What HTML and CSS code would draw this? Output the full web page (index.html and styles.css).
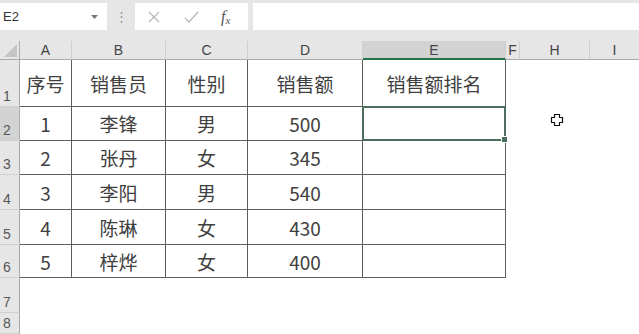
FILE: index.html
```html
<!DOCTYPE html>
<html lang="zh-CN">
<head>
  <meta charset="UTF-8">
  <title>销售额排名</title>
  <link rel="stylesheet" href="styles.css">
</head>
<body>
  <!-- formula bar -->
  <div class="toolbar">
    <div class="namebox">
      <span>E2</span>
      <svg class="caret" width="7" height="4" viewBox="0 0 7 4"><path d="M0 0h7L3.5 4z" fill="#777"/></svg>
    </div>
    <div class="grip">⋮</div>
    <div class="fxbox">
      <svg width="14" height="14" viewBox="0 0 14 14"><path d="M2 2l10 10M12 2L2 12" stroke="#b8b8b8" stroke-width="1.3" fill="none"/></svg>
      <svg width="16" height="14" viewBox="0 0 16 14"><path d="M2 8l4 4 9-10" stroke="#b8b8b8" stroke-width="1.3" fill="none"/></svg>
      <span class="fx"><i>f</i><sub>x</sub></span>
    </div>
    <div class="formula"></div>
  </div>

  <!-- sheet -->
  <div class="sheet">
    <div class="hd corner"><svg width="13" height="13" viewBox="0 0 13 13"><path d="M13 0v13H0z" fill="#c4c4c4"/></svg></div>
    <div class="hd col">A</div>
    <div class="hd col">B</div>
    <div class="hd col">C</div>
    <div class="hd col">D</div>
    <div class="hd col on">E</div>
    <div class="hd col">F</div>
    <div class="hd col">H</div>
    <div class="hd col last">I</div>

    <div class="hd row">1</div>
    <div class="c">序号</div><div class="c">销售员</div><div class="c">性别</div><div class="c">销售额</div><div class="c">销售额排名</div>
    <div class="blank"></div>

    <div class="hd row on">2</div>
    <div class="c">1</div><div class="c">李锋</div><div class="c">男</div><div class="c">500</div><div class="c sel"><div class="selbox"><span class="handle"></span></div></div>
    <div class="blank"><svg class="cursor" width="14" height="14" viewBox="0 0 14 14"><path d="M4.5 1.5h5v3h3v5h-3v3h-5v-3h-3v-5h3z" fill="#fff" stroke="#111" stroke-width="1.2"/></svg></div>

    <div class="hd row">3</div>
    <div class="c">2</div><div class="c">张丹</div><div class="c">女</div><div class="c">345</div><div class="c"></div>
    <div class="blank"></div>

    <div class="hd row">4</div>
    <div class="c">3</div><div class="c">李阳</div><div class="c">男</div><div class="c">540</div><div class="c"></div>
    <div class="blank"></div>

    <div class="hd row">5</div>
    <div class="c">4</div><div class="c">陈琳</div><div class="c">女</div><div class="c">430</div><div class="c"></div>
    <div class="blank"></div>

    <div class="hd row">6</div>
    <div class="c">5</div><div class="c">梓烨</div><div class="c">女</div><div class="c">400</div><div class="c"></div>
    <div class="blank"></div>

    <div class="hd row">7</div>
    <div class="empty"></div>

    <div class="hd row">8</div>
    <div class="empty"></div>
  </div>
</body>
</html>
```

FILE: styles.css
```css
html {
  font: 14px/1 "Liberation Sans", "Noto Sans CJK SC", sans-serif;
}
body {
  margin: 0;
  width: 639px;
  height: 334px;
  overflow: hidden;
  background: #fff;
}
.toolbar {
  display: flex;
  align-items: stretch;
  height: 27px;
  padding: 3px 0 11px;
  background: #e6e6e6;
}
.namebox {
  width: 104px;
  padding-left: 3px;
  display: flex;
  align-items: center;
  justify-content: space-between;
  background: #fff;
  color: #333;
  font-size: 13px;
}
.caret {
  margin-right: 9px;
}
.grip {
  width: 28px;
  display: flex;
  align-items: center;
  justify-content: center;
  color: #9a9a9a;
  font-size: 13px;
}
.fxbox {
  width: 113px;
  display: flex;
  align-items: center;
  gap: 22px;
  padding-left: 12px;
  box-sizing: border-box;
  background: #fff;
}
.fx {
  font: italic 16px "Liberation Serif", serif;
  color: #555;
}
.fx sub {
  font-size: 11px;
  vertical-align: -2px;
}
.formula {
  flex: 1;
  margin-left: 5px;
  background: #fff;
}
.sheet {
  display: grid;
  grid-template-columns: 20px 52px 94px 82px 115px 143px 14px 70px 1fr;
  grid-template-rows: 19px 47px 34px 34px 35px 35px 33px 35px 1fr;
  height: 293px;
}
.hd {
  background: #e6e6e6;
  color: #444;
  box-sizing: border-box;
  border-right: 1px solid #cfcfcf;
  border-bottom: 1px solid #cfcfcf;
}
.corner {
  display: flex;
  align-items: flex-end;
  justify-content: flex-end;
  padding: 0 2px 2px 0;
  border-bottom-color: #ababab;
  border-right-color: #ababab;
}
.col {
  display: flex;
  align-items: center;
  justify-content: center;
  font-size: 14px;
  border-bottom-color: #ababab;
}
.col.last {
  border-right: 0;
}
.col.on {
  background: #d3d3d3;
  border-bottom: 2px solid #217346;
}
.row {
  display: flex;
  align-items: flex-end;
  padding: 0 0 3px 3px;
  font-size: 14px;
  color: #555;
  border-right-color: #ababab;
}
.row.on {
  background: #d3d3d3;
}
.c {
  display: flex;
  align-items: center;
  justify-content: center;
  box-sizing: border-box;
  border-right: 1px solid #5e5e5e;
  border-bottom: 1px solid #5e5e5e;
  font: 19px "Noto Sans CJK SC", sans-serif;
  color: #404040;
}
.blank {
  grid-column: 7 / 10;
  position: relative;
}
.empty {
  grid-column: 2 / 10;
}
.sel {
  position: relative;
}
.selbox {
  position: absolute;
  inset: -1px;
  border: 2px solid #4d6e5c;
}
.handle {
  position: absolute;
  right: -4px;
  bottom: -4px;
  width: 5px;
  height: 5px;
  background: #4d6e5c;
  border: 1px solid #fff;
}
.cursor {
  position: absolute;
  left: 44px;
  top: 6px;
}
```
